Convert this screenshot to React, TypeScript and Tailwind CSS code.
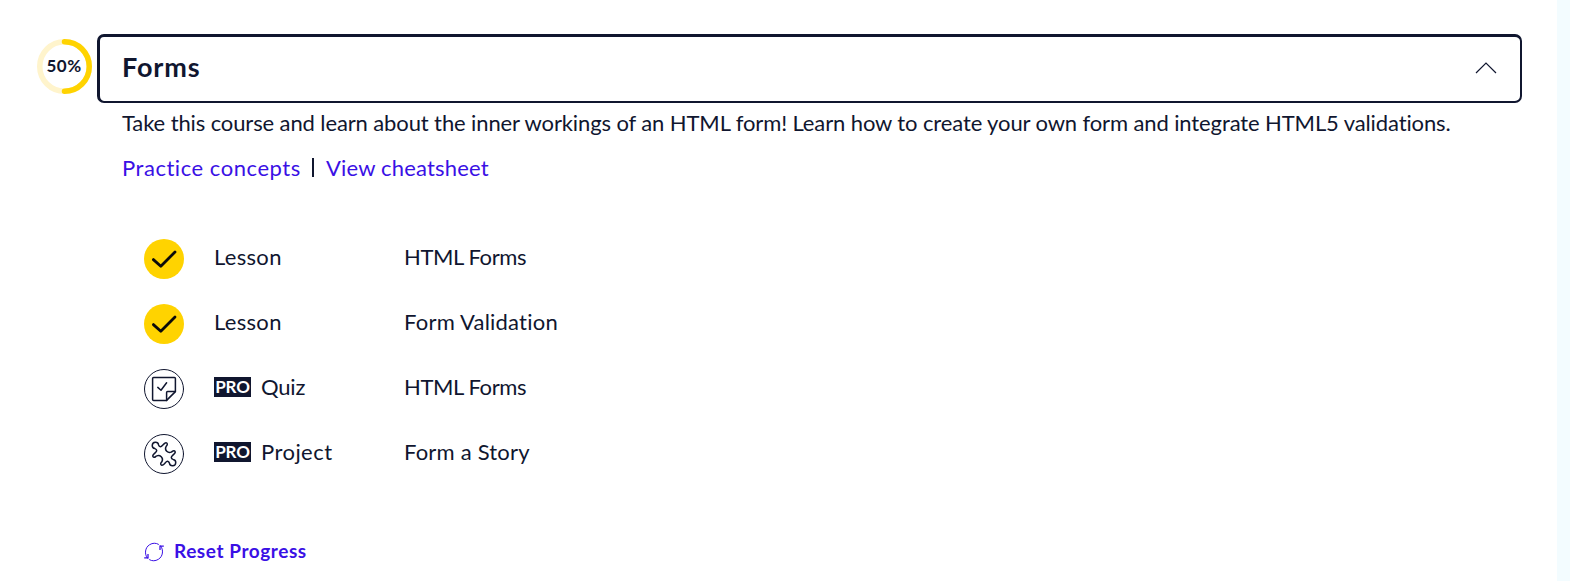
import React from 'react';

type Kind = 'done' | 'quiz' | 'project';

interface Item {
  kind: Kind;
  pro: boolean;
  type: string;
  typeClass: string;
  title: string;
  titleClass: string;
}

const items: Item[] = [
  { kind: 'done', pro: false, type: 'Lesson', typeClass: 'tracking-[0.3px]', title: 'HTML Forms', titleClass: 'tracking-[-0.4px]' },
  { kind: 'done', pro: false, type: 'Lesson', typeClass: 'tracking-[0.3px]', title: 'Form Validation', titleClass: 'tracking-[0.22px]' },
  { kind: 'quiz', pro: true, type: 'Quiz', typeClass: 'tracking-[-0.2px]', title: 'HTML Forms', titleClass: 'tracking-[-0.4px]' },
  { kind: 'project', pro: true, type: 'Project', typeClass: 'tracking-[0.45px]', title: 'Form a Story', titleClass: 'tracking-[0.2px]' },
];

function StatusIcon({ kind }: { kind: Kind }) {
  if (kind === 'done') {
    return (
      <svg className="size-10 shrink-0" viewBox="0 0 40 40" fill="none">
        <circle cx="20" cy="20" r="20" fill="#ffd300" />
        <path d="M9.4 20.6 16.8 27.2 31 13" stroke="#0a0a0a" strokeWidth="2.8" strokeLinecap="round" strokeLinejoin="round" />
      </svg>
    );
  }
  return (
    <svg className="size-10 shrink-0" viewBox="0 0 40 40" fill="none" stroke="#10162f" strokeLinecap="round" strokeLinejoin="round">
      <circle cx="20" cy="20" r="19.5" strokeWidth="1" />
      {kind === 'quiz' ? (
        <g strokeWidth="1.5">
          <path d="M9.6 8.6H30.4Q31.4 8.6 31.4 9.6V22.6L22.6 31.4H9.6Q8.6 31.4 8.6 30.4V9.6Q8.6 8.6 9.6 8.6Z" />
          <path d="M31.4 22.6H23.6Q22.6 22.6 22.6 23.6V31.4" />
          <path d="M13.8 18.4 17 21.2 22.6 13.8" />
        </g>
      ) : (
        <path
          strokeWidth="1.5"
          d="M23.3 10.2C23.3 8.9 22 8.4 21 9.1C18.8 10.7 17.9 12.9 16.4 12.7C15.2 12.5 14.9 11.8 14.6 10.9A3.2 3.2 0 1 0 10.9 14.6C11.8 14.9 12.5 15.2 12.7 16.4C12.9 17.9 10.7 18.8 9.1 21C8.4 22 8.9 23.3 10.2 23.3C11.4 23.3 11.6 22.3 12.7 21.9A4.1 4.1 0 0 1 18.1 27.3C17.7 28.4 16.7 28.6 16.7 29.8C16.7 31.1 18 31.6 19 30.9C21.2 29.3 22.1 27.1 23.6 27.3C24.8 27.5 25.1 28.2 25.4 29.1A3.2 3.2 0 1 0 29.1 25.4C28.2 25.1 27.5 24.8 27.3 23.6C27.1 22.1 29.3 21.2 30.9 19C31.6 18 31.1 16.7 29.8 16.7C28.6 16.7 28.4 17.7 27.3 18.1A4.1 4.1 0 0 1 21.9 12.7C22.3 11.6 23.3 11.4 23.3 10.2Z"
        />
      )}
    </svg>
  );
}

function ProgressRing() {
  return (
    <div className="mt-[39px] grid size-[55px] shrink-0 place-items-center">
      <svg className="col-start-1 row-start-1 size-[55px]" viewBox="0 0 55 55" fill="none" strokeWidth="5.5">
        <circle cx="27.5" cy="27.5" r="24.75" stroke="#fff4cc" />
        <path d="M27.5 2.75A24.75 24.75 0 0 1 27.5 52.25" stroke="#ffd300" strokeLinecap="round" />
      </svg>
      <span className="col-start-1 row-start-1 pr-px pb-[2px] text-[17px] leading-5 font-bold tracking-[0.5px]">50%</span>
    </div>
  );
}

export default function App() {
  return (
    <div className="flex h-[581px] w-full overflow-hidden bg-white font-['Lato',sans-serif] text-[22px] text-[#10162f]">
      <main className="flex min-w-0 flex-1 pl-[37px]">
        <ProgressRing />
        <section className="ml-[5px] min-w-0 flex-1 pt-[34px] pr-[35px]">
          <button className="flex h-[69px] w-full items-center justify-between rounded-[7px] border-2 border-t-[3px] border-l-[3px] border-[#10162f] pr-[23px] pl-[22px]">
            <h3 className="pb-[5px] text-[27px] leading-8 font-bold tracking-[0.85px]">Forms</h3>
            <svg className="mb-[3px] h-3 w-[22px]" viewBox="0 0 22 12" fill="none" stroke="#10162f" strokeWidth="1.2">
              <path d="M1 11 11 1 21 11" />
            </svg>
          </button>
          <div className="pl-[25px]">
            <p className="mt-1 h-8 leading-8 tracking-[-0.115px] whitespace-nowrap">
              Take this course and learn about the inner workings of an HTML form! Learn how to create your own form and integrate HTML5 validations.
            </p>
            <div className="mt-[13px] flex h-8 leading-8 whitespace-nowrap">
              <a className="w-[190px] tracking-[0.54px] text-[#3a10e5]">Practice concepts</a>
              <i className="mt-[6px] h-[19px] w-[2px] bg-[#10162f]" />
              <a className="ml-[12px] tracking-[0.18px] text-[#3a10e5]">View cheatsheet</a>
            </div>
            <ul className="mt-[55px] flex flex-col gap-[25px] pl-[22px]">
              {items.map((item, i) => (
                <li key={i} className="flex h-10 items-center whitespace-nowrap">
                  <StatusIcon kind={item.kind} />
                  <div className="ml-[30px] flex w-[190px] items-center pb-[5px]">
                    {item.pro && (
                      <span className="mr-[10px] flex h-5 w-[37px] items-center justify-center bg-[#10162f] text-[17px] leading-5 font-bold tracking-[-0.2px] text-white">
                        PRO
                      </span>
                    )}
                    <span className={item.typeClass}>{item.type}</span>
                  </div>
                  <span className={'pb-[6px] ' + item.titleClass}>{item.title}</span>
                </li>
              ))}
            </ul>
            <button className="mt-[61px] ml-[22px] flex h-8 items-center text-[19px] font-bold text-[#3a10e5]">
              <svg className="mt-px size-5" viewBox="0 0 20 20" fill="none" stroke="currentColor" strokeWidth="1">
                <path d="M3.6 16.5C.2 12 1 5.5 5.6 2.7C8.6.8 12 .8 14.8 2.5" />
                <path d="M16.4 3.5C19.8 8 19 14.5 14.4 17.3C11.4 19.2 8 19.2 5.2 17.5" />
                <path d="M.2 15.8H4V12M19.8 4.2H16V8" strokeWidth="1.3" />
              </svg>
              <span className="ml-[10px] tracking-[0.57px]">Reset Progress</span>
            </button>
          </div>
        </section>
      </main>
      <aside className="w-[13px] shrink-0 bg-[#f3fcff]" />
    </div>
  );
}
